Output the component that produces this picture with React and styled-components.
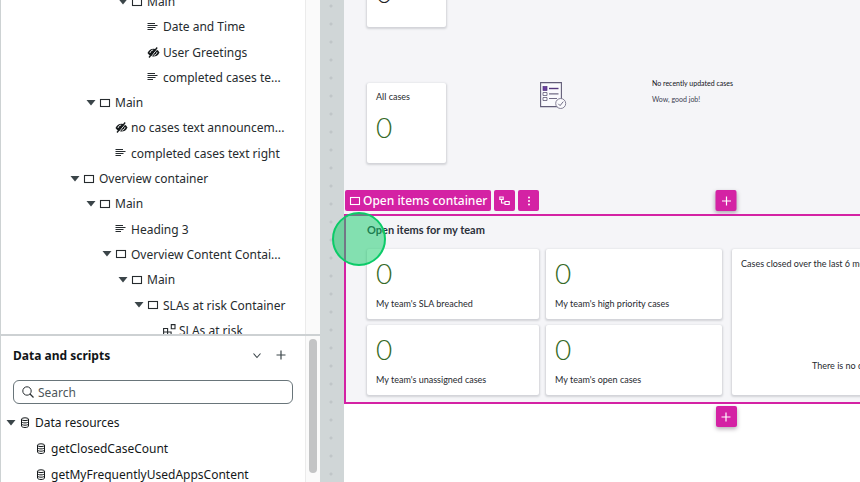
import React from "react";
import styled, { createGlobalStyle } from "styled-components";

const pink = "#d422a4";

const GlobalStyle = createGlobalStyle`
  *, *::before, *::after { box-sizing: border-box; }
  body { margin: 0; background: #fff; }
  button, input { font: inherit; color: inherit; }
  ul, h2, p { margin: 0; padding: 0; font-weight: inherit; }
  ul { list-style: none; }
  svg { display: block; flex: none; }
`;

const Page = styled.div`
  display: grid;
  grid-template-columns: 320px minmax(0, 1fr);
  height: 100vh;
  overflow: hidden;
  font-family: "Noto Sans", sans-serif;
  font-size: 12px;
  color: #262b2e;
`;

const Sidebar = styled.aside`
  display: flex;
  flex-direction: column;
  min-height: 0;
  border-left: 1px solid #cdd2d3;
`;

const Pane = styled.section`
  display: grid;
  grid-template-columns: minmax(0, 1fr) 15px;
  flex: ${(p) => (p.$fill ? "1 1 0" : "none")};
  height: ${(p) => (p.$fill ? "auto" : "334px")};
  min-height: 0;
  overflow: hidden;
  border-top: ${(p) => (p.$fill ? "2px solid #cdd1d3" : "0")};
`;

const Track = styled.div`
  background: #fafafa;
  border-left: 1px solid #ebebeb;
  padding: 3px 3px 10px;
`;

const Thumb = styled.div`
  width: 8px;
  height: 134px;
  border-radius: 4px;
  background: #c3c4c5;
`;

const Tree = styled.ul`
  display: flex;
  flex-direction: column;
  justify-content: space-between;
  height: 354px;
  margin-top: -11px;
`;

const TreeRow = styled.li`
  display: flex;
  align-items: center;
  height: 25px;
  padding-left: ${(p) => p.$depth * 16 + 66}px;
  white-space: nowrap;
`;

const Slot = styled.span`
  display: flex;
  justify-content: ${(p) => (p.$caret ? "center" : "flex-start")};
  flex: none;
  width: 16px;
`;

const PaneHeader = styled.header`
  display: flex;
  align-items: center;
  gap: 14px;
  height: 38px;
  padding: 0 19px 0 12px;
`;

const PaneTitle = styled.h2`
  flex: 1;
  font-size: 12px;
  font-weight: 700;
  color: #111517;
`;

const IconButton = styled.button`
  display: flex;
  border: 0;
  padding: 0;
  background: none;
  color: #3d474b;
`;

const SearchBox = styled.label`
  display: flex;
  align-items: center;
  gap: 4px;
  height: 24px;
  margin: 6px 12px;
  padding: 0 8px;
  border: 1px solid #69757a;
  border-radius: 6px;
  color: #2a3033;
`;

const SearchInput = styled.input`
  flex: 1;
  min-width: 0;
  border: 0;
  padding: 0;
  outline: 0;
  background: none;
  &::placeholder { color: #4d565a; opacity: 1; }
`;

const DataList = styled.ul`
  display: grid;
  gap: 1px;
`;

const DataRow = styled.li`
  display: flex;
  align-items: center;
  height: 25px;
  padding-left: ${(p) => p.$depth * 16 + 2}px;
  color: #14181a;
`;

const Stage = styled.main`
  padding-left: 24px;
  overflow: clip;
  background: radial-gradient(circle, #c0c6c8 1px, transparent 2px) 2px 15px / 18px 18px #d0d6d7;
  font-family: Lato, sans-serif;
`;

const Canvas = styled.div`
  min-width: 764px;
  min-height: 100vh;
  background: #fff;
`;

const Overview = styled.div`
  display: flex;
  align-items: flex-start;
  height: 190px;
  padding-left: 23px;
  overflow: hidden;
  background: #f5f5f8;
`;

const CaseColumn = styled.div`
  display: grid;
  gap: 56px;
  width: 79px;
  margin-top: -53px;
`;

const Card = styled.article`
  border-radius: 2px;
  background: #fff;
  box-shadow: 0 1px 2px 1px rgba(40, 45, 60, 0.17);
`;

const CaseCard = styled(Card)`
  display: flex;
  flex-direction: column;
  gap: ${(p) => (p.$tall ? 6 : 5)}px;
  height: 80px;
  padding: 7px 9px;
`;

const Caption = styled.p`
  font-size: 9px;
  line-height: 14px;
  white-space: nowrap;
  color: #26292e;
`;

const Count = styled.p`
  font-size: 28px;
  line-height: 36px;
  font-weight: 300;
  color: ${(p) => (p.$dark ? "#222" : "#356a26")};
`;

const EmptyState = styled.div`
  display: flex;
  gap: 85px;
  margin: 82px 0 0 94px;
`;

const EmptyText = styled.div`
  font-size: 7px;
  line-height: 16px;
  margin-top: -7px;
  color: #3b4050;
`;

const EmptyTitle = styled.p`
  color: #101218;
`;

const Toolbar = styled.div`
  display: flex;
  gap: 3px;
  height: 24px;
  padding-left: 1px;
  background: #f5f5f8;
  position: relative;
`;

const ToolButton = styled.button`
  display: flex;
  align-items: center;
  justify-content: center;
  gap: 2px;
  height: 21px;
  min-width: 21px;
  padding: 0 ${(p) => (p.$label ? 4 : 0)}px;
  border: 0;
  border-radius: 2px;
  background: ${pink};
  color: #fff;
  font-family: "Noto Sans", sans-serif;
  font-size: 12px;
  font-weight: 500;
  white-space: nowrap;
`;

const AddButton = styled(ToolButton)`
  box-shadow: 0 2px 4px rgba(40, 20, 40, 0.35);
`;

const AddOverlay = styled.div`
  position: absolute;
  top: 0;
  left: 50%;
  transform: translateX(-50%);
`;

const AddRow = styled.div`
  display: flex;
  justify-content: center;
  padding-top: 2px;
`;

const Selected = styled.section`
  position: relative;
  padding: 6px 20px 7px 21px;
  border: 2px solid ${pink};
  background: #f5f5f8;
`;

const Heading = styled.h2`
  font-size: 11px;
  line-height: 16px;
  font-weight: 700;
  color: #2b303a;
`;

const Board = styled.div`
  display: grid;
  grid-template-columns: 355px minmax(0, 1fr);
  gap: 10px;
  margin-top: 11px;
`;

const Stats = styled.div`
  display: grid;
  grid-template-columns: 172fr 176fr;
  gap: 6px 7px;
`;

const StatCard = styled(Card)`
  display: flex;
  flex-direction: column;
  gap: 6px;
  height: 70px;
  padding: 6px 9px;
`;

const ChartCard = styled(Card)`
  display: flex;
  flex-direction: column;
  padding: 8px 9px;
`;

const ChartEmpty = styled(Caption)`
  margin: auto 0 14px 71px;
`;

const ClickMarker = styled.div`
  position: absolute;
  top: -4px;
  left: -14px;
  width: 54px;
  height: 54px;
  border: 2px solid #0bcb68;
  border-radius: 50%;
  background: rgba(18, 203, 104, 0.5);
`;

const Caret = () => (
  <svg width="10" height="6" viewBox="0 0 10 6"><path d="M.5 0h9L5 5.500z" fill="#3b4549" /></svg>
);
const BoxIcon = () => (
  <svg width="12" height="10" viewBox="0 0 12 10"><rect x="1.5" y="1.500" width="9" height="7" fill="none" stroke="currentColor" strokeWidth="1.1" /></svg>
);
const TextIcon = () => (
  <svg width="12" height="10" viewBox="0 0 12 10"><path d="M.5 1.500h7.500M.5 3.500h10M.5 5.500h8M.5 7.500h5.500" stroke="currentColor" strokeWidth="1" /></svg>
);
const HiddenIcon = () => (
  <svg width="13" height="11" viewBox="0 0 13 11">
    <path d="M.5 6C2 3 4 1.800 6.500 1.800S11 3 12.500 5.500C11 8.500 9 9.500 6.500 9.500S2 8.500.5 6z" fill="#15191b" />
    <path d="M3 6c.3-1.700 1.500-2.800 3.200-3M10 5.200c-.3 1.700-1.500 2.900-3.200 3.200" fill="none" stroke="#fff" strokeWidth=".9" />
    <path d="M3.300 10.800 11 1" stroke="#fff" strokeWidth="1" />
    <path d="M2 10.500 10.200.5" stroke="#15191b" strokeWidth="1.300" />
  </svg>
);
const WidgetIcon = () => (
  <svg width="13" height="13" viewBox="0 0 13 13"><path d="M.6 4.500h4v7.500h-4zM.6 8h7.500v4H.6zM8.300.6h3.700v4.200H8.300z" fill="none" stroke="currentColor" strokeWidth="1.1" /></svg>
);
const DataIcon = () => (
  <svg width="12" height="11" viewBox="0 0 12 11" fill="none" stroke="currentColor" strokeWidth="1">
    <ellipse cx="6" cy="2.200" rx="3.500" ry="1.400" />
    <path d="M2.500 2.200V9c0 .8 1.600 1.500 3.500 1.500S9.500 9.800 9.500 9V2.200M2.500 4.500c0 .8 1.600 1.400 3.500 1.400s3.500-.6 3.500-1.400M2.500 6.800c0 .8 1.600 1.400 3.500 1.400s3.500-.6 3.500-1.400" />
  </svg>
);
const ChevronIcon = () => (
  <svg width="10" height="10" viewBox="0 0 10 10"><path d="m1.500 3.500 3.500 4 3.500-4" fill="none" stroke="currentColor" strokeWidth="1.1" /></svg>
);
const PlusIcon = () => (
  <svg width="10" height="10" viewBox="0 0 10 10"><path d="M5 .5v9M.5 5h9" stroke="currentColor" strokeWidth="1.2" /></svg>
);
const SearchIcon = () => (
  <svg width="12" height="12" viewBox="0 0 12 12"><circle cx="5" cy="5" r="4.200" fill="none" stroke="currentColor" /><path d="m8 8 3.500 3.500" stroke="currentColor" strokeWidth="1.2" /></svg>
);
const ParentIcon = () => (
  <svg width="11" height="10" viewBox="0 0 11 10" fill="none" stroke="currentColor" strokeWidth="1.1"><path d="M.8 1h3.400v2.400H.8zM2.500 3.400V7h3M6 5.500h4.200v3H6z" /></svg>
);
const DotsIcon = () => (
  <svg width="4" height="10" viewBox="0 0 4 10" fill="currentColor"><circle cx="2" cy="1.400" r="1" /><circle cx="2" cy="5" r="1" /><circle cx="2" cy="8.600" r="1" /></svg>
);
const ChecklistArt = () => (
  <svg width="27" height="28" viewBox="0 0 27 28" fill="none">
    <path d="M.6.600h20.800v24H.6z" fill="#fafafd" stroke="#625d78" strokeWidth="1.1" />
    <rect x="3" y="4.500" width="4" height="4" fill="#6b3fa0" stroke="#51347d" strokeWidth=".7" />
    <path d="M3 10.500h4v3H3zM3 15.500h4v3H3z" stroke="#5f5a76" strokeWidth=".8" />
    <path d="M9 6.500h9.500" stroke="#54377c" strokeWidth="1.400" />
    <path d="M9 11.800h9.500M9 16.500h8" stroke="#716c85" strokeWidth="1.200" />
    <circle cx="20.700" cy="21.500" r="5" fill="#fafafd" stroke="#77738a" strokeWidth=".9" />
    <path d="m18.300 21.800 1.800 1.800 3.200-4" stroke="#625d78" strokeWidth=".9" />
  </svg>
);

const icons = { box: BoxIcon, text: TextIcon, hidden: HiddenIcon, widget: WidgetIcon };

const treeItems = [
  [3, "box", "Main"],
  [4, "text", "Date and Time"],
  [4, "hidden", "User Greetings"],
  [4, "text", "completed cases te..."],
  [1, "box", "Main"],
  [2, "hidden", "no cases text announcem..."],
  [2, "text", "completed cases text right"],
  [0, "box", "Overview container"],
  [1, "box", "Main"],
  [2, "text", "Heading 3"],
  [2, "box", "Overview Content Contai..."],
  [3, "box", "Main"],
  [4, "box", "SLAs at risk Container"],
  [5, "widget", "SLAs at risk"],
];

const dataItems = [
  [0, "Data resources"],
  [1, "getClosedCaseCount"],
  [1, "getMyFrequentlyUsedAppsContent"],
];

const stats = [
  "My team's SLA breached",
  "My team's high priority cases",
  "My team's unassigned cases",
  "My team's open cases",
];

export default function App() {
  return (
    <Page>
      <GlobalStyle />
      <Sidebar>
        <Pane>
          <Tree>
            {treeItems.map(([depth, kind, label], i) => {
              const Icon = icons[kind];
              return (
                <TreeRow key={i} $depth={depth}>
                  <Slot $caret>{kind === "box" && <Caret />}</Slot>
                  <Slot><Icon /></Slot>
                  {label}
                </TreeRow>
              );
            })}
          </Tree>
          <Track />
        </Pane>
        <Pane $fill>
          <div>
            <PaneHeader>
              <PaneTitle>Data and scripts</PaneTitle>
              <IconButton aria-label="Collapse"><ChevronIcon /></IconButton>
              <IconButton aria-label="Add data"><PlusIcon /></IconButton>
            </PaneHeader>
            <SearchBox>
              <SearchIcon />
              <SearchInput type="text" placeholder="Search" aria-label="Search" />
            </SearchBox>
            <DataList>
              {dataItems.map(([depth, label]) => (
                <DataRow key={label} $depth={depth}>
                  <Slot $caret>{depth === 0 && <Caret />}</Slot>
                  <Slot><DataIcon /></Slot>
                  {label}
                </DataRow>
              ))}
            </DataList>
          </div>
          <Track><Thumb /></Track>
        </Pane>
      </Sidebar>
      <Stage>
        <Canvas>
          <Overview>
            <CaseColumn>
              <CaseCard $tall>
                <Caption>My cases</Caption>
                <Count $dark>0</Count>
              </CaseCard>
              <CaseCard>
                <Caption>All cases</Caption>
                <Count>0</Count>
              </CaseCard>
            </CaseColumn>
            <EmptyState>
              <ChecklistArt />
              <EmptyText>
                <EmptyTitle>No recently updated cases</EmptyTitle>
                <p>Wow, good job!</p>
              </EmptyText>
            </EmptyState>
          </Overview>
          <Toolbar>
            <ToolButton $label><BoxIcon />Open items container</ToolButton>
            <ToolButton aria-label="Select parent"><ParentIcon /></ToolButton>
            <ToolButton aria-label="More actions"><DotsIcon /></ToolButton>
            <AddOverlay><AddButton aria-label="Add above"><PlusIcon /></AddButton></AddOverlay>
          </Toolbar>
          <Selected>
            <Heading>Open items for my team</Heading>
            <Board>
              <Stats>
                {stats.map((label) => (
                  <StatCard key={label}>
                    <Count>0</Count>
                    <Caption>{label}</Caption>
                  </StatCard>
                ))}
              </Stats>
              <ChartCard>
                <Caption>Cases closed over the last 6 months</Caption>
                <ChartEmpty>There is no data available</ChartEmpty>
              </ChartCard>
            </Board>
            <ClickMarker />
          </Selected>
          <AddRow><AddButton aria-label="Add below"><PlusIcon /></AddButton></AddRow>
        </Canvas>
      </Stage>
    </Page>
  );
}
